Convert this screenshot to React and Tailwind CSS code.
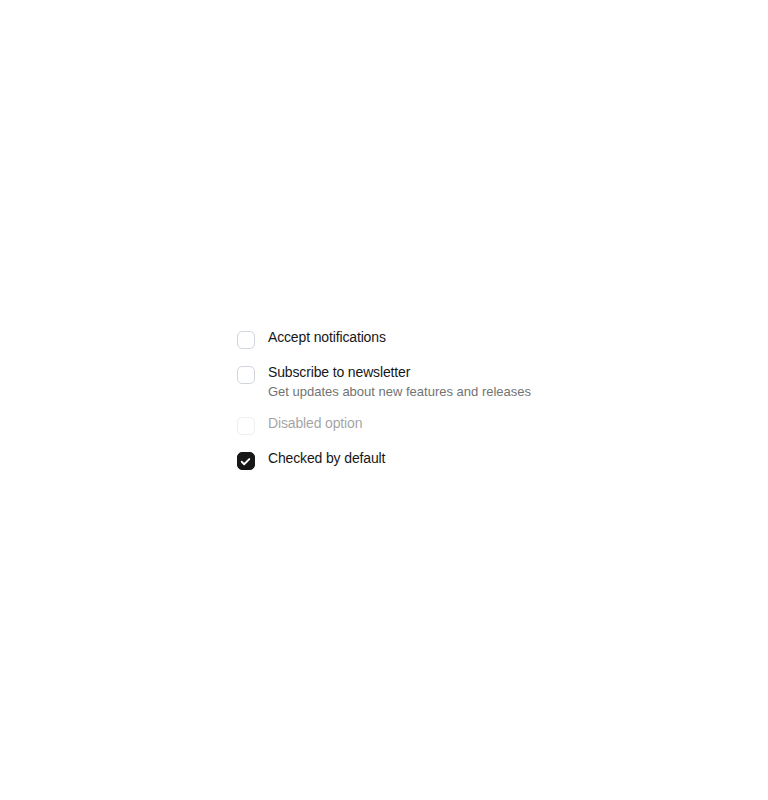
import { useState } from 'react';

function Checkbox({ label, description, disabled, defaultChecked }) {
  const [checked, setChecked] = useState(!!defaultChecked);

  return (
    <label
      className={`flex items-start gap-[13px] ${disabled ? 'opacity-40 cursor-not-allowed' : 'cursor-pointer'}`}
    >
      <button
        type="button"
        role="checkbox"
        aria-checked={checked}
        disabled={disabled}
        onClick={() => setChecked((c) => !c)}
        className={`mt-1 flex size-[18px] shrink-0 items-center justify-center rounded-[5px] border ${
          checked ? 'border-[#171717] bg-[#171717]' : 'border-gray-300 bg-white'
        }`}
      >
        {checked && (
          <svg viewBox="0 0 24 24" className="size-[13px] text-white" fill="none" stroke="currentColor" strokeWidth="3.5" strokeLinecap="round" strokeLinejoin="round">
            <path d="M5 12.5l4.5 4.5L19 7.5" />
          </svg>
        )}
      </button>
      <div className="flex flex-col">
        <span className="text-sm leading-5 tracking-[-0.01em] text-[#171717]">{label}</span>
        {description && (
          <span className="mt-0.5 text-[13px] leading-4 text-neutral-500">{description}</span>
        )}
      </div>
    </label>
  );
}

export default function App() {
  return (
    <div
      className="flex min-h-[800px] w-full items-center justify-center bg-white pb-[3px]"
      style={{ fontFamily: '"Liberation Sans", Arial, sans-serif' }}
    >
      <div className="flex flex-col gap-[13px]">
        <Checkbox label="Accept notifications" />
        <Checkbox
          label="Subscribe to newsletter"
          description="Get updates about new features and releases"
        />
        <Checkbox label="Disabled option" disabled />
        <Checkbox label="Checked by default" defaultChecked />
      </div>
    </div>
  );
}
